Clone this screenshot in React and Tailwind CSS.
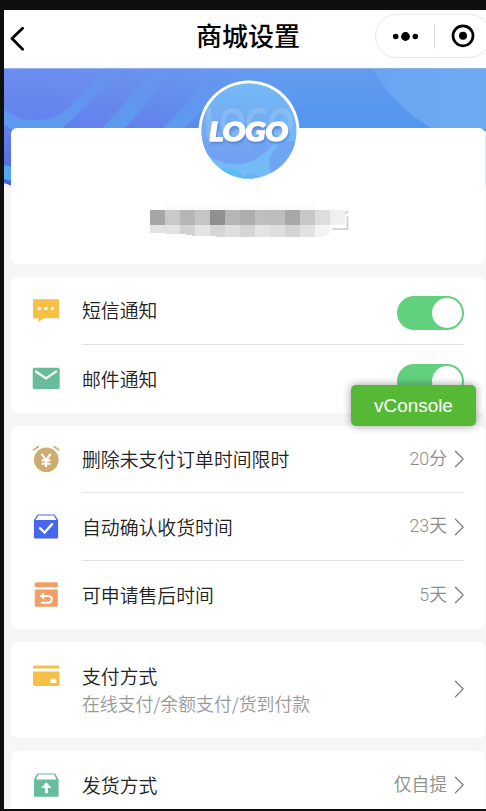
import { useState } from "react";

const BackIcon = () => (
  <svg className="w-4 h-6" viewBox="0 0 16 24" fill="none" stroke="#000" strokeWidth="2.8" strokeLinecap="round" strokeLinejoin="round">
    <path d="M13.6 1.2 3 11.6l10.6 10.6" />
  </svg>
);

const ArrowIcon = () => (
  <svg className="w-[10px] h-[18px] shrink-0" viewBox="0 0 10 18" fill="none" stroke="#777" strokeWidth="1.1">
    <path d="M1.2 1 9.2 9l-8 8" />
  </svg>
);

const SmsIcon = () => (
  <svg className="w-7 h-7" viewBox="0 0 28 28">
    <path d="M1 2.2h26v19H11.5L6.6 25.2v-4H1z" fill="#f6c046" />
    <g fill="#fff">
      <circle cx="7.5" cy="11.4" r="1.7" />
      <circle cx="14" cy="11.4" r="1.7" />
      <circle cx="20.4" cy="11.4" r="1.7" />
    </g>
  </svg>
);

const MailIcon = () => (
  <svg className="w-7 h-7" viewBox="0 0 28 28">
    <rect x="0.7" y="2.7" width="27" height="21.3" rx="1.8" fill="#67bc99" />
    <path d="M3.2 6 14 13.400l10.800-7.400" fill="none" stroke="#fff" strokeWidth="2.2" />
  </svg>
);

const ClockIcon = () => (
  <svg className="w-7 h-7" viewBox="0 0 28 28">
    <circle cx="14.3" cy="14.7" r="12.3" fill="#cfab70" />
    <path d="M.8 5.5 6.4 1.3M27.4 5.5 21.8 1.3" stroke="#fff" strokeWidth="4.5" />
    <path d="M1.6 4.9 6.2 1.7M26.8 4.900 22.200 1.700" stroke="#cfab70" strokeWidth="1.7" strokeLinecap="round" />
    <path d="m9.500 8.800 4.600 6.200 4.600-6.200M14.100 14.300v7.800M9.700 15.400h8.800M9.700 18.800h8.800" fill="none" stroke="#fff" strokeWidth="2.1" />
  </svg>
);

const ConfirmIcon = () => (
  <svg className="w-7 h-7" viewBox="0 0 28 28">
    <path d="M5.6 1.5h16.8l3.7 5.4v17.6a1 1 0 0 1-1 1H2.9a1 1 0 0 1-1-1V6.9z" fill="#4766ee" />
    <path d="M6.3 2.6h15.4l2.8 4.3h-21z" fill="#fff" />
    <path d="m8 15.2 4.6 4.4 7.6-8.6" fill="none" stroke="#fff" strokeWidth="2.3" strokeLinecap="round" />
  </svg>
);

const RefundIcon = () => (
  <svg className="w-7 h-7" viewBox="0 0 28 28">
    <rect x="2.6" y="1.2" width="23.4" height="5" rx="1.6" fill="#f19f67" />
    <rect x="2.8" y="8.6" width="23" height="17.2" rx="1" fill="#f19f67" />
    <path d="M9 15h7.5a3.4 3.4 0 0 1 0 6.8H9.6" fill="none" stroke="#fff" strokeWidth="2" strokeLinecap="round" />
    <path d="M12.2 11.4v7.4L7.8 15.1z" fill="#fff" />
  </svg>
);

const CardIcon = () => (
  <svg className="w-7 h-7" viewBox="0 0 28 28">
    <path d="M1 5.4v-1a1.8 1.8 0 0 1 1.8-1.8h23a1.8 1.8 0 0 1 1.8 1.8v1z" fill="#f6c046" />
    <path d="M1 8.6h26.6v12.6a1.8 1.8 0 0 1-1.8 1.8h-23A1.8 1.8 0 0 1 1 21.2z" fill="#f6c046" />
    <path d="M18.4 15.8h4.2a1.8 1.8 0 0 1 1.8 1.8V20h-6z" fill="#fff" />
  </svg>
);

const ShipIcon = () => (
  <svg className="w-7 h-7" viewBox="0 0 28 28">
    <path d="M5.2 2.4h18l3.4 6.2v16a1.2 1.2 0 0 1-1.2 1.2H3.2A1.2 1.2 0 0 1 2 24.6v-16z" fill="#67bc99" />
    <path d="M6.3 3.6h15.900l2.200 4.800H4.200z" fill="#fff" />
    <path d="m14.4 11.2 5.2 5.800h-3.700v5.200h-3V17H9.200z" fill="#fff" />
  </svg>
);

const Banner = () => (
  <svg className="absolute left-0 top-0 w-[482px] h-[118px]" viewBox="0 0 482 118" preserveAspectRatio="none">
    <defs>
      <linearGradient id="sky" x1="0" y1="0" x2="1" y2="0">
        <stop offset="0" stopColor="#6a8df0" />
        <stop offset="0.35" stopColor="#6b94ee" />
        <stop offset="0.6" stopColor="#639eef" />
        <stop offset="1" stopColor="#5a9bf0" />
      </linearGradient>
      <linearGradient id="shade" gradientUnits="userSpaceOnUse" x1="0" y1="0" x2="0" y2="118">
        <stop offset="0" stopColor="#6079ea" stopOpacity="0" />
        <stop offset="0.5" stopColor="#5a75ea" stopOpacity="0.55" />
        <stop offset="1" stopColor="#4465e2" />
      </linearGradient>
      <linearGradient id="right" x1="0" y1="0" x2="0" y2="1">
        <stop offset="0" stopColor="#649bed" />
        <stop offset="0.5" stopColor="#5297ef" />
        <stop offset="1" stopColor="#4f98f0" />
      </linearGradient>
      <linearGradient id="rightFade" x1="0" y1="0" x2="1" y2="0">
        <stop offset="0.3" stopColor="#fff" stopOpacity="0" />
        <stop offset="0.62" stopColor="#fff" />
      </linearGradient>
      <mask id="rightMask" maskUnits="userSpaceOnUse" x="0" y="0" width="482" height="118">
        <rect width="482" height="118" fill="url(#rightFade)" />
      </mask>
      <linearGradient id="ribbon" gradientUnits="userSpaceOnUse" x1="0" y1="0" x2="0" y2="61">
        <stop offset="0" stopColor="#6598f0" stopOpacity="0.25" />
        <stop offset="0.5" stopColor="#6198f0" stopOpacity="0.75" />
        <stop offset="1" stopColor="#5c9cf0" />
      </linearGradient>
      <linearGradient id="wave" gradientUnits="userSpaceOnUse" x1="370" y1="30" x2="482" y2="30">
        <stop offset="0" stopColor="#68a5f1" />
        <stop offset="1" stopColor="#6dabf1" />
      </linearGradient>
    </defs>
    <path d="M0 0h482v118H8Q4 116 0 115z" fill="url(#sky)" />
    <path d="M0 0h482v118H8Q4 116 0 115z" fill="url(#shade)" />
    <rect x="60" width="422" height="118" fill="url(#right)" mask="url(#rightMask)" />
    <path d="M0 40C15 56 46 56 62 42C78 28 88 14 106 0H124C98 20 78 42 56 62H9L0 56z" fill="url(#ribbon)" />
    <path d="M150 0C132 22 114 44 96 62H118C138 44 152 22 172 0z" fill="url(#ribbon)" />
    <path d="M212 0C194 22 176 44 157 62H178C198 44 218 22 240 0z" fill="url(#ribbon)" />
    <path d="M0 97l8 2v14l-8-2z" fill="#53a8ef" />
    <path d="M368 0C384 29 411 52 430 61H482V0z" fill="url(#wave)" />
    <path d="M480 63h2v55h-2z" fill="#d9effb" />
    <path d="M0 .5h482" stroke="#8fb0ea" />
  </svg>
);

const Logo = () => (
  <svg className="w-[102px] h-[102px]" viewBox="0 0 102 102">
    <defs>
      <linearGradient id="logoBg" x1="0" y1="0" x2="0.3" y2="1">
        <stop offset="0" stopColor="#66bbf3" />
        <stop offset="0.5" stopColor="#74b4f5" />
        <stop offset="1" stopColor="#72bdf6" />
      </linearGradient>
      <linearGradient id="logoBall" x1="0" y1="0" x2="0" y2="1">
        <stop offset="0" stopColor="#74bdf5" />
        <stop offset="1" stopColor="#739ff2" />
      </linearGradient>
      <clipPath id="logoClip">
        <circle cx="51" cy="51" r="47.5" />
      </clipPath>
    </defs>
    <circle cx="51" cy="51" r="50.5" fill="#fff" />
    <g clipPath="url(#logoClip)">
      <rect width="102" height="102" fill="url(#logoBg)" />
      <circle cx="37" cy="38" r="46" fill="url(#logoBall)" />
      <circle cx="94" cy="84" r="23" fill="#6f9df2" opacity="0.75" />
      <path d="M16 91q20-8 35 10H20z" fill="#5cbdf5" />
      <circle cx="54" cy="103" r="10" fill="#6ab0f2" />
    </g>
    <text x="6" y="57" textLength="90" lengthAdjust="spacingAndGlyphs" fontFamily="Lato" fontWeight="900" fontSize="40" fill="#fff" opacity="0.13">LOGO</text>
    <text
      className="drop-shadow-[1px_2px_1px_rgba(60,110,200,0.6)]"
      x="11"
      y="61"
      textLength="79"
      lengthAdjust="spacingAndGlyphs"
      fontFamily="Lato"
      fontStyle="italic"
      fontWeight="900"
      fontSize="27"
      fill="#fff"
      stroke="#fff"
      strokeWidth="1.5"
      strokeLinejoin="round"
    >
      LOGO
    </text>
  </svg>
);

const MOSAIC = [
  ["#a6a6a6", "#c9c9c9", "#b6b6b6", "#c5c5c5", "#909090", "#b5b5b5", "#adadad", "#bfbfbf", "#bdbdbd", "#a8a8a8", "#c7c7c7", "#dddddd", "#efefef"],
  ["#e2e2e2", "#e3e3e3", "#d2d2d2", "#e4e4e4", "#d6d6d6", "#dfdfdf", "#d5d5d5", "#e4e4e4", "#dedede", "#d4d4d4", "#e2e2e2", "#f4f4f4", "#ffffff"],
];

// masked shop name with the edit corner behind it
const ShopName = () => (
  <svg className="w-[200px] h-[30px]" viewBox="0 0 200 30">
    <clipPath id="nameClip">
      <path d="M0 3h192q3 0 3 4v7q0 4-4 4h-7q-4 12-12 12H66v-1H42v-1H36v-1H15v-1H0z" />
    </clipPath>
    <path d="M15 0h150v3H15z" fill="#fafafa" />
    <path d="M197.5 9v13H182M195 7l3-3" fill="none" stroke="#ccc" strokeWidth="1.7" />
    <g clipPath="url(#nameClip)" shapeRendering="crispEdges">
      {MOSAIC.map((row, y) =>
        row.map((color, x) => <rect key={`${x}-${y}`} x={x * 15} y={3 + y * 15} width="15" height="15" fill={color} />)
      )}
    </g>
  </svg>
);

const Toggle = ({ on, onClick }) => (
  <button
    onClick={onClick}
    className={`mt-[5px] flex h-[34px] w-[67.5px] items-center rounded-full px-[2px] ${on ? "justify-end bg-[#62d17e]" : "justify-start bg-[#e5e5e5]"}`}
  >
    <span className="h-[30px] w-[30px] rounded-full bg-white" />
  </button>
);

const Row = ({ icon, label, value, children, last }) => (
  <div className="flex h-[67.8px] px-[21px]">
    <div className="flex w-[50px] shrink-0 items-center">{icon}</div>
    <div className={`flex flex-1 items-center justify-between ${last ? "" : "border-b border-[#e2e2e2]"}`}>
      <span className="pt-[4px] text-[18.85px] font-[350] text-[#222]">{label}</span>
      {children || (
        <div className="flex items-center gap-[7px]">
          <span className="font-[Roboto,'Noto_Sans_CJK_SC',sans-serif] text-[17.8px] font-[350] text-[#8c8c8c]">{value}</span>
          <ArrowIcon />
        </div>
      )}
    </div>
  </div>
);

const Card = ({ children, className = "" }) => (
  <section className={`ml-[7px] mr-px mb-[13px] shrink-0 rounded-md bg-white ${className}`}>{children}</section>
);

function App() {
  const [sms, setSms] = useState(true);
  const [mail, setMail] = useState(true);

  return (
    <div className="relative h-[811px] w-[486px] overflow-hidden bg-[#0f0f0f] pl-1 pt-2.5 pb-0.5 font-['Liberation_Sans','Noto_Sans_CJK_SC',sans-serif]">
      <div className="flex h-full flex-col overflow-hidden bg-[#f6f6f6]">
        <header className="flex h-[58px] shrink-0 overflow-hidden bg-white">
          <button className="flex w-[192px] shrink-0 items-center pl-[5px]">
            <BackIcon />
          </button>
          <h1 className="w-[179px] shrink-0 pt-[8px] text-[26px] leading-[39px] font-medium text-black">商城设置</h1>
          <div className="mt-[4px] flex h-[44px] w-[116px] shrink-0 items-center rounded-full border border-[#e9e9e9]">
            <svg className="w-[58px] h-[42px]" viewBox="0 0 58 42">
              <circle cx="19.7" cy="21.5" r="2.8" />
              <circle cx="29.5" cy="21.5" r="4.4" />
              <circle cx="39.3" cy="21.5" r="2.8" />
            </svg>
            <span className="h-[25px] w-px bg-[#dedede]" />
            <svg className="w-[54px] h-[42px]" viewBox="0 0 54 42">
              <circle cx="28" cy="20.8" r="10" fill="none" stroke="#000" strokeWidth="2.7" />
              <circle cx="28" cy="20.8" r="4" />
            </svg>
          </div>
        </header>

        <main className="relative flex flex-col pt-[60px]">
          <Banner />
          <Card className="relative flex h-[136px] flex-col items-center pl-[2px]">
            <div className="-mt-[48px]">
              <Logo />
            </div>
            <div className="mt-[25px] ml-[2px]">
              <ShopName />
            </div>
          </Card>

          <Card>
            <Row icon={<SmsIcon />} label="短信通知">
              <Toggle on={sms} onClick={() => setSms(!sms)} />
            </Row>
            <Row icon={<MailIcon />} label="邮件通知" last>
              <Toggle on={mail} onClick={() => setMail(!mail)} />
            </Row>
          </Card>

          <Card>
            <Row icon={<ClockIcon />} label="删除未支付订单时间限时" value="20分" />
            <Row icon={<ConfirmIcon />} label="自动确认收货时间" value="23天" />
            <Row icon={<RefundIcon />} label="可申请售后时间" value="5天" last />
          </Card>

          <Card className="flex h-[96px] items-center px-[21px] pb-[2px]">
            <div className="flex h-full w-[50px] shrink-0 items-start pt-[21px]">
              <CardIcon />
            </div>
            <div className="flex flex-1 flex-col">
              <span className="pt-[3px] text-[18.85px] leading-[25px] font-[350] text-[#222]">支付方式</span>
              <span className="font-['Noto_Sans_CJK_SC'] text-[17.85px] leading-[26px] font-[350] text-[#999]">
                在线支付/余额支付/货到付款
              </span>
            </div>
            <ArrowIcon />
          </Card>

          <Card>
            <Row icon={<ShipIcon />} label="发货方式" value="仅自提" last />
          </Card>
        </main>
      </div>

      <button className="absolute left-[351px] top-[385px] h-[41px] w-[125px] rounded-[5px] bg-[#55b936] pt-[2px] text-[18.9px] text-white shadow-[0_0_9px_rgba(0,0,0,0.4)]">
        vConsole
      </button>
    </div>
  );
}

export default App;
